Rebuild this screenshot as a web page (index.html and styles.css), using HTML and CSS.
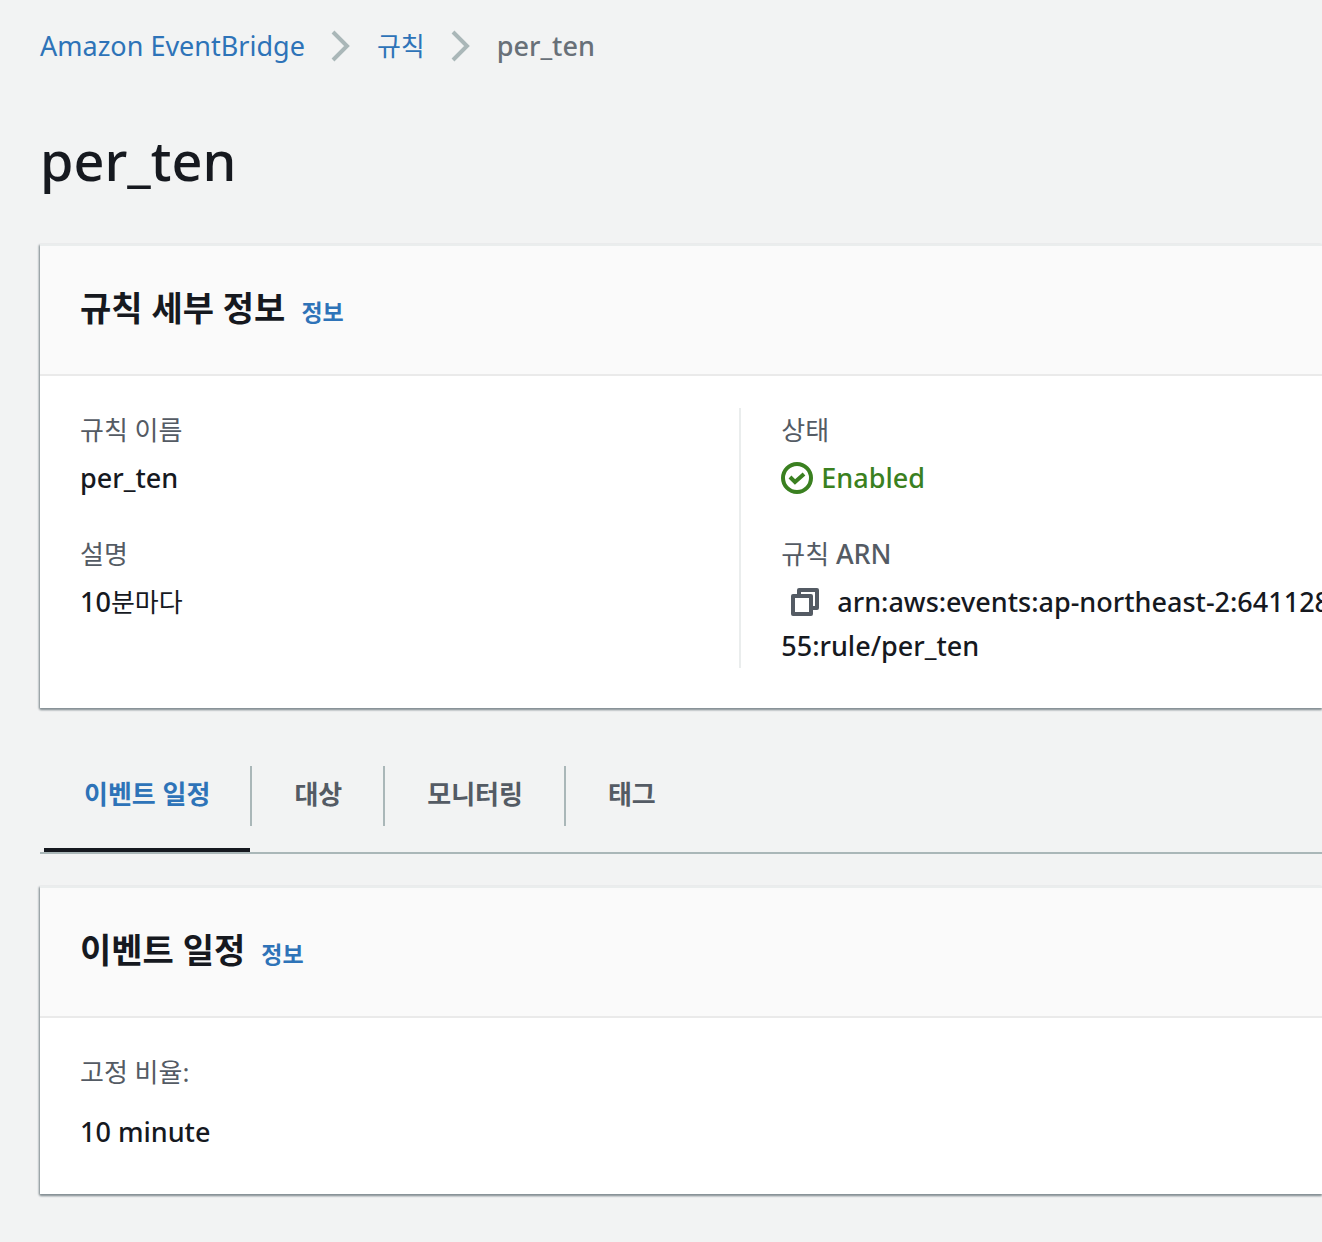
FILE: index.html
```html
<!DOCTYPE html>
<html lang="ko">
<head>
<meta charset="utf-8">
<meta name="viewport" content="width=device-width, initial-scale=1">
<title>per_ten - Amazon EventBridge</title>
<link rel="stylesheet" href="styles.css">
</head>
<body>
<main class="page">
  <nav class="breadcrumb" aria-label="Breadcrumb">
    <a class="latin" href="#eventbridge">Amazon EventBridge</a>
    <svg class="chevron" viewBox="0 0 20 32" aria-hidden="true"><path d="M2 2 16 16 2 30"/></svg>
    <a href="#rules">규칙</a>
    <svg class="chevron" viewBox="0 0 20 32" aria-hidden="true"><path d="M2 2 16 16 2 30"/></svg>
    <span class="current latin">per_ten</span>
  </nav>

  <h1 class="title">per_ten</h1>

  <section class="panel">
    <header class="panel-header">
      <h2>규칙 세부 정보</h2>
      <a class="info" href="#rule-info">정보</a>
    </header>
    <div class="panel-body columns">
      <dl class="column">
        <div class="field">
          <dt>규칙 이름</dt>
          <dd class="latin">per_ten</dd>
        </div>
        <div class="field">
          <dt>설명</dt>
          <dd><span class="latin">10</span>분마다</dd>
        </div>
      </dl>
      <dl class="column">
        <div class="field">
          <dt>상태</dt>
          <dd class="status latin">
            <svg class="status-icon" viewBox="0 0 32 32" aria-hidden="true"><circle cx="16" cy="16" r="14"/><path d="m9 15 5 5 9-8"/></svg>
            <span>Enabled</span>
          </dd>
        </div>
        <div class="field">
          <dt>규칙 <span class="latin">ARN</span></dt>
          <dd class="latin arn"><button class="copy" type="button" aria-label="복사"><svg viewBox="0 0 28 28" aria-hidden="true"><path d="M8 7V2h18v18h-5M2 8h18v18H2z"/></svg></button>arn:aws:events:ap-northeast-2:641128<br>55:rule/per_ten</dd>
        </div>
      </dl>
    </div>
  </section>

  <div class="tabs" role="tablist">
    <button class="tab" type="button" role="tab" aria-selected="true">이벤트 일정</button>
    <button class="tab" type="button" role="tab" aria-selected="false">대상</button>
    <button class="tab" type="button" role="tab" aria-selected="false">모니터링</button>
    <button class="tab" type="button" role="tab" aria-selected="false">태그</button>
  </div>

  <section class="panel">
    <header class="panel-header">
      <h2>이벤트 일정</h2>
      <a class="info" href="#schedule-info">정보</a>
    </header>
    <dl class="panel-body schedule">
      <dt>고정 비율:</dt>
      <dd class="latin">10 minute</dd>
    </dl>
  </section>
</main>
</body>
</html>
```
FILE: styles.css
```css
* {
  box-sizing: border-box;
}

body {
  margin: 0;
  background: #f2f3f3;
  color: #16191f;
  font-family: "Noto Sans", "Noto Sans CJK KR", sans-serif;
  font-size: 26px;
  line-height: 44px;
  overflow-x: hidden;
}

h1,
h2,
dl,
dd {
  margin: 0;
}

a {
  color: #2e73b8;
  text-decoration: none;
}

.latin {
  font-size: 27px;
  font-weight: 500;
}

.page {
  padding: 24px 0 48px 40px;
}

.breadcrumb {
  display: flex;
  align-items: center;
  gap: 26px;
}

.breadcrumb .latin {
  font-weight: 400;
}

.chevron {
  width: 20px;
  height: 32px;
  fill: none;
  stroke: #aab7b8;
  stroke-width: 4;
}

.breadcrumb .current {
  color: #687078;
  font-weight: 500;
}

.title {
  margin: 52px 0 44px;
  font-size: 54px;
  font-weight: 500;
  line-height: 80px;
}

.panel {
  border-top: 2px solid #eaeded;
  background: #fff;
  box-shadow: 0 2px 2px #879196, -1px 1px 2px #879196;
}

.panel-header {
  display: flex;
  align-items: baseline;
  gap: 16px;
  padding: 40px 40px 44px;
  border-bottom: 2px solid #eaeaea;
  background: #fafafa;
}

.panel-header h2 {
  font-size: 34px;
  font-weight: 700;
  line-height: 44px;
}

.info {
  font-size: 23px;
  font-weight: 700;
  line-height: 32px;
}

.panel-body {
  padding: 32px 0 40px;
}

.columns {
  display: grid;
  grid-template-columns: 6fr 5fr;
}

.column {
  display: flex;
  flex-direction: column;
  gap: 32px;
  min-width: 0;
  padding-left: 40px;
}

.column + .column {
  border-left: 2px solid #eaeded;
}

.field {
  display: flex;
  flex-direction: column;
  gap: 4px;
}

dt {
  height: 44px;
  color: #545b64;
}

dd {
  min-height: 44px;
}

.status {
  display: flex;
  align-items: center;
  gap: 8px;
  color: #3a8020;
}

.status-icon {
  width: 32px;
  height: 32px;
  fill: none;
  stroke: currentColor;
  stroke-width: 4;
}

.arn {
  white-space: nowrap;
}

.copy {
  margin: 0 18px 0 10px;
  padding: 0;
  border: 0;
  background: none;
  color: #545b64;
  line-height: 0;
}

.copy svg {
  width: 28px;
  height: 28px;
  fill: none;
  stroke: currentColor;
  stroke-width: 4;
  stroke-linejoin: round;
  vertical-align: -4px;
}

.tabs {
  display: flex;
  margin: 56px 0 32px;
  padding-left: 4px;
  border-bottom: 2px solid #aab7b8;
}

.tab {
  position: relative;
  height: 88px;
  padding: 0 41px 28px 44px;
  border: 0;
  background: none;
  color: #545b64;
  font: inherit;
  font-weight: 700;
  line-height: 60px;
}

.tab + .tab::before {
  content: "";
  position: absolute;
  top: 2px;
  left: 0;
  width: 2px;
  height: 60px;
  background: #aab7b8;
}

.tab[aria-selected="true"] {
  padding: 0 40px 24px;
  border-bottom: 4px solid #16191f;
  color: #2e73b8;
}

.schedule {
  display: flex;
  flex-direction: column;
  gap: 16px;
  padding-left: 40px;
}
```
